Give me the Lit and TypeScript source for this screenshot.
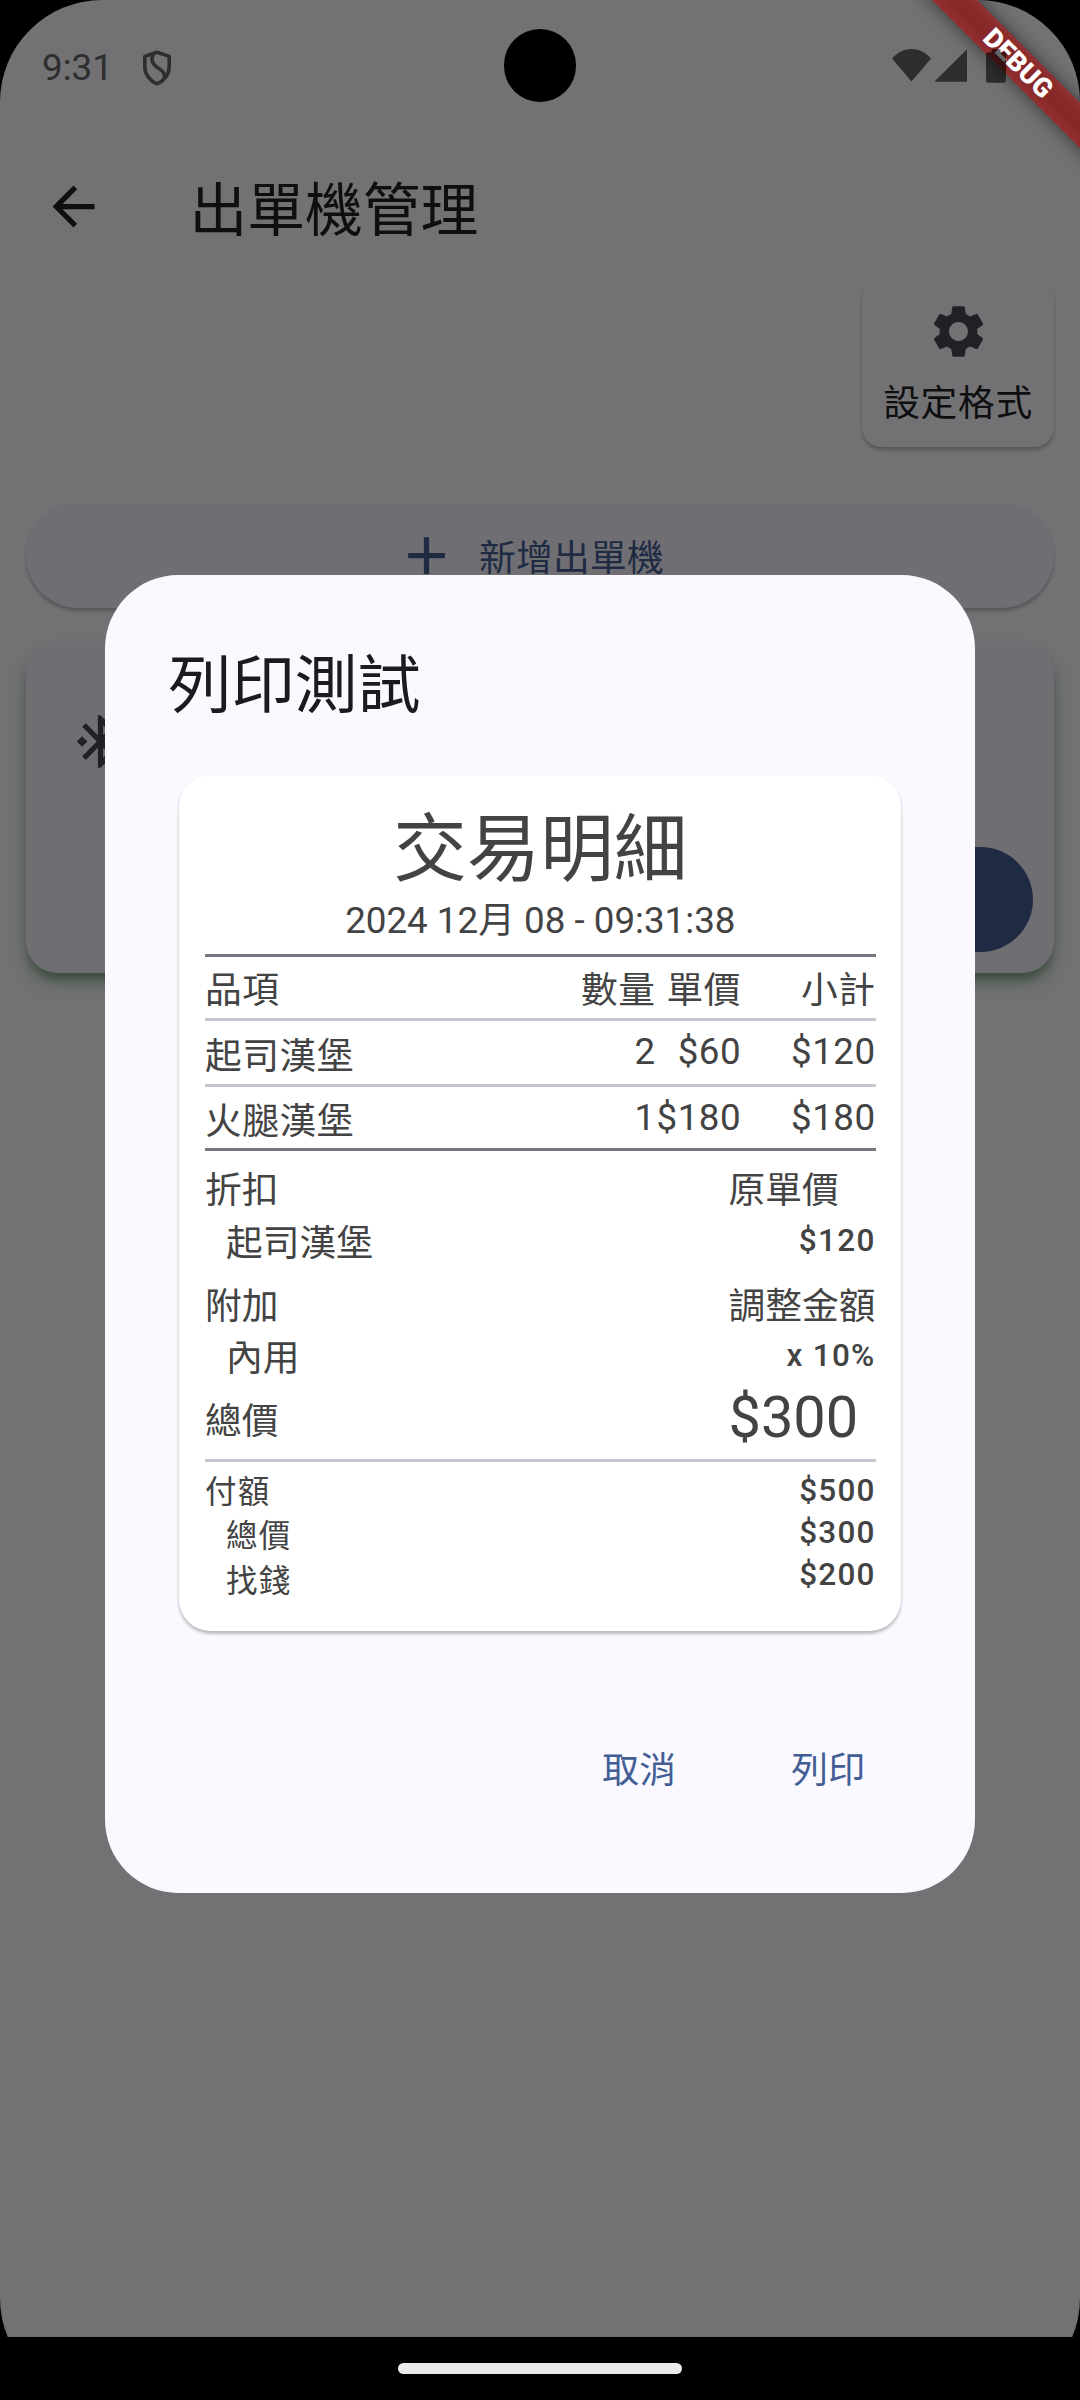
import { LitElement, html, css, svg } from "lit";
import { customElement } from "lit/decorators.js";

const icon = (d: string, cls = "") => html`<svg class="icon ${cls}" viewBox="0 0 24 24">${svg`<path d=${d}></path>`}</svg>`;

const ICONS = {
  back: "M20 11H7.83l5.59-5.59L12 4l-8 8 8 8 1.41-1.41L7.83 13H20v-2z",
  settings:
    "M19.14 12.94c.04-.3.06-.61.06-.94 0-.32-.02-.64-.07-.94l2.03-1.58c.18-.14.23-.41.12-.61l-1.92-3.32c-.12-.22-.37-.29-.59-.22l-2.39.96c-.5-.38-1.03-.7-1.62-.94l-.36-2.54c-.04-.24-.24-.41-.48-.41h-3.84c-.24 0-.43.17-.47.41l-.36 2.54c-.59.24-1.13.57-1.62.94l-2.39-.96c-.22-.08-.47 0-.59.22L2.74 8.87c-.12.21-.08.47.12.61l2.03 1.58c-.05.3-.09.63-.09.94s.02.64.07.94l-2.03 1.58c-.18.14-.23.41-.12.61l1.92 3.32c.12.22.37.29.59.22l2.39-.96c.5.38 1.03.7 1.62.94l.36 2.54c.05.24.24.41.48.41h3.84c.24 0 .44-.17.47-.41l.36-2.54c.59-.24 1.13-.56 1.62-.94l2.39.96c.22.08.47 0 .59-.22l1.92-3.32c.12-.22.07-.47-.12-.61l-2.01-1.58zM12 15.6c-1.98 0-3.6-1.62-3.6-3.6s1.62-3.6 3.6-3.6 3.6 1.62 3.6 3.6-1.62 3.6-3.6 3.6z",
  add: "M19 13h-6v6h-2v-6H5v-2h6V5h2v6h6v2z",
  bluetooth:
    "M7 12l-2-2-2 2 2 2 2-2zm10.71-4.29L12 2h-1v7.59L6.41 5 5 6.41 10.59 12 5 17.59 6.41 19 11 14.41V22h1l5.71-5.71-4.3-4.29 4.3-4.29zM13 5.83l1.88 1.88L13 9.59V5.83zm1.88 10.46L13 18.17v-3.76l1.88 1.88zM19 10l-2 2 2 2 2-2-2-2z",
};

const ITEMS = [
  { name: "起司漢堡", count: "2", price: "$60", total: "$120" },
  { name: "火腿漢堡", count: "1", price: "$180", total: "$180" },
];

@customElement("printer-receipt")
export class PrinterReceipt extends LitElement {
  static styles = css`
    :host {
      display: block;
      box-sizing: border-box;
      height: 856.3px;
      padding: 25px 25.7px 0 26px;
      border-radius: 31.5px;
      background: #fff;
      color: #434343;
      font-size: 36.75px;
      letter-spacing: 0.5px;
      box-shadow: 0 3px 3px rgba(0, 0, 0, 0.2), 0 2px 4px rgba(0, 0, 0, 0.08);
    }
    .title { padding-top: 1px; font-size: 73.5px; line-height: 98px; letter-spacing: 0; text-align: center; }
    .date { line-height: 44.5px; letter-spacing: 0; text-align: center; }
    .rule { height: 2.625px; background: #c4c6d0; }
    .rule.strong { background: #74777f; }
    .rule.first { margin-top: 11px; }
    .row {
      display: grid;
      grid-template-columns: 1fr 100px 85.5px 134.5px;
      align-items: center;
      height: 63.3px;
      line-height: 42px;
      text-align: right;
      white-space: nowrap;
    }
    .row.header { height: 61.4px; }
    .row.last { height: 61.6px; }
    .row > .name { text-align: left; }
    .han { padding-top: 9.5px; }
    .header > .han { padding-top: 7px; }
    .sums {
      display: grid;
      grid-template-columns: 1fr 147.2px;
      grid-template-rows: 53px 53px 63px 52px 73px;
      padding: 12.8px 0 1.7px;
      align-items: center;
      line-height: 43px;
      letter-spacing: 0;
      white-space: nowrap;
    }
    .sub { padding-left: 21px; }
    .drop { padding-top: 10px; }
    .note {
      font-size: 31.5px;
      font-weight: 500;
      letter-spacing: 1.31px;
      text-align: right;
      padding-bottom: 6px;
    }
    .total { font-size: 57.75px; letter-spacing: 0; padding-bottom: 8px; }
    .payments {
      display: flex;
      justify-content: space-between;
      padding-top: 7.6px;
      font-size: 31.5px;
      letter-spacing: 1.2px;
    }
    .labels { padding-top: 1px; line-height: 44.5px; }
    .values { line-height: 42px; font-weight: 500; text-align: right; }
  `;

  render() {
    return html`
      <div class="title">交易明細</div>
      <div class="date">2024 12月 08 - 09:31:38</div>
      <div class="rule strong first"></div>
      <div class="row header">
        <span class="name han">品項</span><span class="han">數量</span><span class="han">單價</span><span class="han">小計</span>
      </div>
      ${ITEMS.map(
        (item, i) => html`
          <div class="rule"></div>
          <div class="row ${i === ITEMS.length - 1 ? "last" : ""}">
            <span class="name han">${item.name}</span><span>${item.count}</span><span>${item.price}</span><span>${item.total}</span>
          </div>
        `,
      )}
      <div class="rule strong"></div>
      <div class="sums">
        <span>折扣</span><span>原單價</span>
        <span class="sub">起司漢堡</span><span class="note">$120</span>
        <span class="drop">附加</span><span class="drop">調整金額</span>
        <span class="sub">內用</span><span class="note">x 10%</span>
        <span>總價</span><span class="total">$300</span>
      </div>
      <div class="rule"></div>
      <div class="payments">
        <div class="labels">
          <div>付額</div>
          <div class="sub">總價</div>
          <div class="sub">找錢</div>
        </div>
        <div class="values">
          <div>$500</div>
          <div>$300</div>
          <div>$200</div>
        </div>
      </div>
    `;
  }
}

@customElement("app-root")
export class AppRoot extends LitElement {
  static styles = css`
    :host {
      display: block;
      position: relative;
      width: 1080px;
      height: 2400px;
      overflow: hidden;
      background: #000;
      font-family: Roboto, "Noto Sans CJK TC", sans-serif;
      -webkit-font-smoothing: antialiased;
    }
    .icon { display: block; width: 63px; height: 63px; fill: currentColor; flex: none; }
    .screen {
      height: 2400px;
      border-radius: 102px;
      overflow: hidden;
      background: #727274;
      display: flex;
      flex-direction: column;
    }
    .statusbar {
      display: flex;
      align-items: center;
      height: 135px;
      flex: none;
      padding-left: 42px;
      box-sizing: border-box;
      color: #2e2e2f;
      font-size: 36.75px;
    }
    .shield { width: 30px; height: 36px; margin-left: 29.5px; }
    .appbar { display: flex; align-items: center; height: 142px; flex: none; padding-left: 42px; color: #0e0f11; }
    .appbar h1 { margin: 10px 0 0 84.5px; font-size: 57.75px; font-weight: 400; line-height: 76px; }
    .content { flex: 1; padding: 1.5px 26px 0; display: flex; flex-direction: column; }
    .format {
      align-self: flex-end;
      width: 192px;
      height: 168.5px;
      box-sizing: border-box;
      padding-top: 21.5px;
      border-radius: 20px;
      display: flex;
      flex-direction: column;
      align-items: center;
      background: #727274;
      color: #202124;
      box-shadow: 0 3px 3px rgba(0, 0, 0, 0.16), 0 3px 4px rgba(0, 0, 0, 0.08);
    }
    .format span { margin-top: 16px; font-size: 36.75px; letter-spacing: 0.66px; line-height: 50px; color: #0e0f11; }
    .add {
      margin-top: 55.5px;
      height: 105.5px;
      flex: none;
      border-radius: 53px;
      display: flex;
      align-items: center;
      padding-left: 369px;
      background: #6f6e73;
      color: #1f2b43;
      font-size: 36.75px;
      line-height: 43px;
      letter-spacing: 0.26px;
      box-shadow: 0 3px 3px rgba(0, 0, 0, 0.16), 0 3px 4px rgba(0, 0, 0, 0.08);
    }
    .add span { margin-left: 21px; padding-top: 5.5px; }
    .printer {
      margin-top: 35.5px;
      height: 329px;
      flex: none;
      border-radius: 31.5px;
      background: #6f6e73;
      color: #202124;
      display: flex;
      justify-content: space-between;
      padding: 66.5px 21px 0 42.5px;
      box-sizing: border-box;
      box-shadow: 0 8px 9px -2px rgba(30, 58, 32, 0.5), 0 10px 18px -1px rgba(40, 62, 42, 0.35);
    }
    .connect { width: 160px; height: 105px; margin-top: 137px; border-radius: 53px; background: #1f2b43; }
    .camera {
      position: absolute;
      left: 503.5px;
      top: 29px;
      width: 72.6px;
      height: 72.6px;
      border-radius: 50%;
      background: #000;
    }
    .corner { position: absolute; left: 880px; top: 0; width: 200px; height: 200px; }
    .corner text {
      font-family: Roboto, sans-serif;
      font-size: 26.8px;
      font-weight: 900;
      fill: #fff;
    }
    .navbar {
      position: absolute;
      left: 0;
      right: 0;
      bottom: 0;
      height: 63px;
      background: #000;
      display: flex;
      justify-content: center;
      padding-top: 26px;
      box-sizing: border-box;
    }
    .handle { width: 284px; height: 11px; border-radius: 5.5px; background: #ebebeb; }
    .dialog {
      position: absolute;
      left: 105px;
      top: 575.3px;
      width: 870px;
      height: 1318px;
      box-sizing: border-box;
      padding: 68.4px 73.7px 0 74px;
      border-radius: 73.5px;
      background: #faf9ff;
    }
    .dialog h2 {
      margin: 0 0 47px -10.5px;
      font-size: 63px;
      line-height: 84px;
      font-weight: 400;
      color: #1a1b20;
    }
    .actions {
      display: flex;
      justify-content: flex-end;
      gap: 115px;
      padding: 115px 36px 0 0;
      font-size: 36.75px;
      line-height: 50px;
      letter-spacing: 0.26px;
      color: #435e94;
    }
  `;

  render() {
    return html`
      <div class="screen">
        <div class="statusbar">
          <span>9:31</span>
          <svg class="shield" viewBox="0 0 30 36" fill="none" stroke="#2e2e2f" stroke-width="3.6" stroke-linejoin="round">
            <path d="M15 2.2L27.2 6.4V16.5C27.2 24.5 22 31 15 33.8C8 31 2.8 24.5 2.8 16.5V6.4Z"></path>
            <path d="M12 3.500C8.500 8 9.500 13 14.500 16.800C19.500 20.500 23.500 22.500 22.300 27.500"></path>
          </svg>
        </div>
        <div class="appbar">${icon(ICONS.back)}<h1>出單機管理</h1></div>
        <div class="content">
          <div class="format">${icon(ICONS.settings)}<span>設定格式</span></div>
          <div class="add">${icon(ICONS.add)}<span>新增出單機</span></div>
          <div class="printer">${icon(ICONS.bluetooth)}<div class="connect"></div></div>
        </div>
      </div>
      <div class="camera"></div>
      <svg class="corner" viewBox="880 0 200 200">
        <defs>
          <clipPath id="screen-corner"><path d="M880 0H978A102 102 0 0 1 1080 102V200H880Z"></path></clipPath>
          <filter id="soft" filterUnits="userSpaceOnUse" x="840" y="-80" width="340" height="340">
            <feGaussianBlur stdDeviation="9"></feGaussianBlur>
          </filter>
        </defs>
        <g clip-path="url(#screen-corner)">
          <path d="M917 -15H962.300L1100 122.700V168Z" fill="#000" opacity="0.52" filter="url(#soft)"></path>
          <path d="M932 0H977.300L1080 102.700V148Z" fill="#b71c1c" fill-opacity="0.627"></path>
        </g>
        <text transform="translate(1018.500 63) rotate(45)" text-anchor="middle" y="9.500">DEBUG</text>
        <g fill="#000" fill-opacity="0.6">
          <path d="M911.500 81.500L892 58.500C897 53 903.500 49 911.500 49C919.500 49 926 53 931 58.500Z"></path>
          <path d="M967 49.300V81.700H934.300Z"></path>
          <path d="M991.500 49.300H1000.500V52.300H1004A2 2 0 0 1 1006 54.300V80.500A2.300 2.300 0 0 1 1003.700 82.800H988.300A2.300 2.300 0 0 1 986 80.500V54.300A2 2 0 0 1 988 52.300H991.500Z"></path>
        </g>
      </svg>
      <div class="navbar"><div class="handle"></div></div>
      <div class="dialog">
        <h2>列印測試</h2>
        <printer-receipt></printer-receipt>
        <div class="actions"><span>取消</span><span>列印</span></div>
      </div>
    `;
  }
}
